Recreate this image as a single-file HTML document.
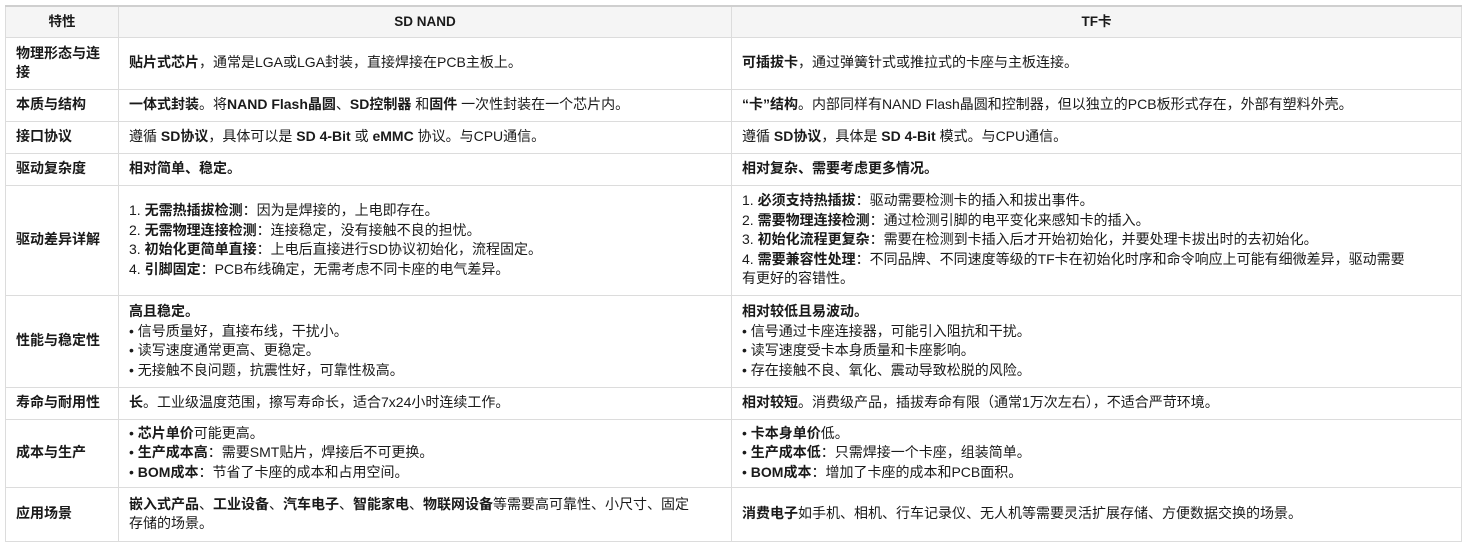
<!DOCTYPE html>
<html><head><meta charset="utf-8"><style>
body{margin:0;background:#fff;font-family:"Liberation Sans","Noto Sans CJK SC",sans-serif;font-size:14px;color:#1a1a1a;}
table{position:absolute;left:5px;top:5px;border-collapse:collapse;table-layout:fixed;width:1456px;}
td,th{border:1px solid #dcdcdc;padding:0 10px;vertical-align:middle;line-height:19.5px;text-align:left;overflow:hidden;}
tr{box-sizing:border-box;}
th{background:#f5f5f5;font-weight:bold;text-align:center;border-top:2px solid #cfcfcf;font-size:13.5px;}
td:first-child{font-weight:bold;}
b{font-weight:bold;}
</style></head><body>
<table>
<colgroup><col style="width:113px"><col style="width:613px"><col style="width:730px"></colgroup>
<tr style="height:31px"><th>特性</th><th>SD NAND</th><th>TF卡</th></tr>
<tr style="height:52px"><td>物理形态与连接</td><td><b>贴片式芯片</b>，通常是LGA或LGA封装，直接焊接在PCB主板上。</td><td><b>可插拔卡</b>，通过弹簧针式或推拉式的卡座与主板连接。</td></tr>
<tr style="height:32px"><td>本质与结构</td><td><b>一体式封装</b>。将<b>NAND Flash晶圆</b>、<b>SD控制器</b> 和<b>固件</b> 一次性封装在一个芯片内。</td><td><b>“卡”结构</b>。内部同样有NAND Flash晶圆和控制器，但以独立的PCB板形式存在，外部有塑料外壳。</td></tr>
<tr style="height:32px"><td>接口协议</td><td>遵循 <b>SD协议</b>，具体可以是 <b>SD 4-Bit</b> 或 <b>eMMC</b> 协议。与CPU通信。</td><td>遵循 <b>SD协议</b>，具体是 <b>SD 4-Bit</b> 模式。与CPU通信。</td></tr>
<tr style="height:32px"><td>驱动复杂度</td><td><b>相对简单、稳定。</b></td><td><b>相对复杂、需要考虑更多情况。</b></td></tr>
<tr style="height:110px"><td>驱动差异详解</td><td>1. <b>无需热插拔检测</b>：因为是焊接的，上电即存在。<br>2. <b>无需物理连接检测</b>：连接稳定，没有接触不良的担忧。<br>3. <b>初始化更简单直接</b>：上电后直接进行SD协议初始化，流程固定。<br>4. <b>引脚固定</b>：PCB布线确定，无需考虑不同卡座的电气差异。</td><td>1. <b>必须支持热插拔</b>：驱动需要检测卡的插入和拔出事件。<br>2. <b>需要物理连接检测</b>：通过检测引脚的电平变化来感知卡的插入。<br>3. <b>初始化流程更复杂</b>：需要在检测到卡插入后才开始初始化，并要处理卡拔出时的去初始化。<br>4. <b>需要兼容性处理</b>：不同品牌、不同速度等级的TF卡在初始化时序和命令响应上可能有细微差异，驱动需要<br>有更好的容错性。</td></tr>
<tr style="height:92px"><td>性能与稳定性</td><td><b>高且稳定。</b><br>• 信号质量好，直接布线，干扰小。<br>• 读写速度通常更高、更稳定。<br>• 无接触不良问题，抗震性好，可靠性极高。</td><td><b>相对较低且易波动。</b><br>• 信号通过卡座连接器，可能引入阻抗和干扰。<br>• 读写速度受卡本身质量和卡座影响。<br>• 存在接触不良、氧化、震动导致松脱的风险。</td></tr>
<tr style="height:32px"><td>寿命与耐用性</td><td><b>长</b>。工业级温度范围，擦写寿命长，适合7x24小时连续工作。</td><td><b>相对较短</b>。消费级产品，插拔寿命有限（通常1万次左右），不适合严苛环境。</td></tr>
<tr style="height:68px"><td>成本与生产</td><td>• <b>芯片单价</b>可能更高。<br>• <b>生产成本高</b>：需要SMT贴片，焊接后不可更换。<br>• <b>BOM成本</b>：节省了卡座的成本和占用空间。</td><td>• <b>卡本身单价</b>低。<br>• <b>生产成本低</b>：只需焊接一个卡座，组装简单。<br>• <b>BOM成本</b>：增加了卡座的成本和PCB面积。</td></tr>
<tr style="height:54px"><td>应用场景</td><td><b>嵌入式产品</b>、<b>工业设备</b>、<b>汽车电子</b>、<b>智能家电</b>、<b>物联网设备</b>等需要高可靠性、小尺寸、固定<br>存储的场景。</td><td><b>消费电子</b>如手机、相机、行车记录仪、无人机等需要灵活扩展存储、方便数据交换的场景。</td></tr>
</table>
</body></html>
